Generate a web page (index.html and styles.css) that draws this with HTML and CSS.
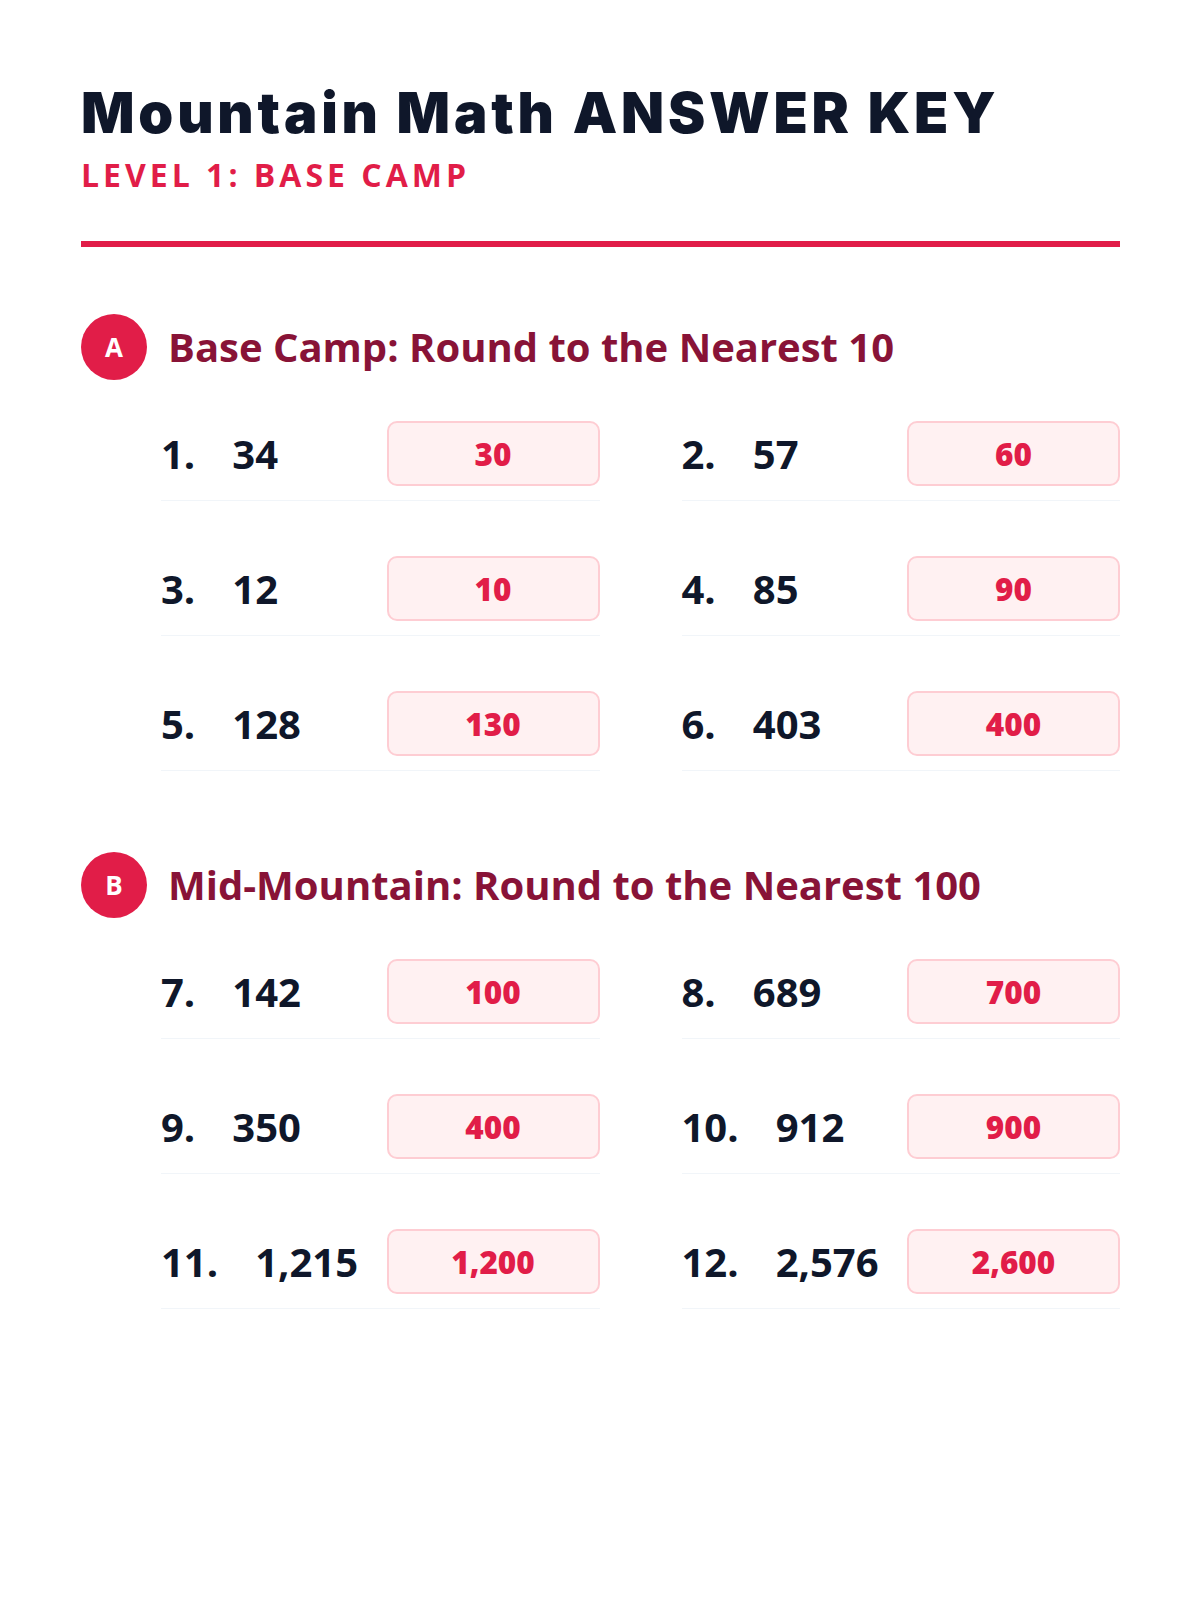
FILE: index.html
```html
<!DOCTYPE html>
<html lang="en">
<head>
<meta charset="utf-8">
<title>Mountain Math Answer Key</title>
<link rel="stylesheet" href="styles.css">
</head>
<body>
<main class="page">
  <header class="header">
    <h1 class="title">Mountain Math ANSWER KEY</h1>
    <p class="subtitle">LEVEL 1: BASE CAMP</p>
  </header>

  <section class="section">
    <div class="section-head">
      <span class="badge">A</span>
      <h2 class="section-title">Base Camp: Round to the Nearest 10</h2>
    </div>
    <div class="grid">
      <div class="row"><span class="num">1.</span><span class="val">34</span><span class="ans">30</span></div>
      <div class="row"><span class="num">2.</span><span class="val">57</span><span class="ans">60</span></div>
      <div class="row"><span class="num">3.</span><span class="val">12</span><span class="ans">10</span></div>
      <div class="row"><span class="num">4.</span><span class="val">85</span><span class="ans">90</span></div>
      <div class="row"><span class="num">5.</span><span class="val">128</span><span class="ans">130</span></div>
      <div class="row"><span class="num">6.</span><span class="val">403</span><span class="ans">400</span></div>
    </div>
  </section>

  <section class="section">
    <div class="section-head">
      <span class="badge">B</span>
      <h2 class="section-title">Mid-Mountain: Round to the Nearest 100</h2>
    </div>
    <div class="grid">
      <div class="row"><span class="num">7.</span><span class="val">142</span><span class="ans">100</span></div>
      <div class="row"><span class="num">8.</span><span class="val">689</span><span class="ans">700</span></div>
      <div class="row"><span class="num">9.</span><span class="val">350</span><span class="ans">400</span></div>
      <div class="row"><span class="num">10.</span><span class="val">912</span><span class="ans">900</span></div>
      <div class="row"><span class="num">11.</span><span class="val">1,215</span><span class="ans">1,200</span></div>
      <div class="row"><span class="num">12.</span><span class="val">2,576</span><span class="ans">2,600</span></div>
    </div>
  </section>
</main>
</body>
</html>
```

FILE: styles.css
```css
* { box-sizing: border-box; }

html, body {
  margin: 0;
  padding: 0;
  background: #ffffff;
}

body {
  font-family: "Open Sans", "Noto Sans", "Liberation Sans", sans-serif;
  color: #0f172a;
}

.page {
  width: 1200px;
  padding: 80px 80px 80px 81px;
}

.header {
  padding-bottom: 45px;
  border-bottom: 6px solid #e11d48;
}

.title {
  margin: 0;
  font-family: "Inter", "Liberation Sans", sans-serif;
  font-weight: 900;
  font-size: 56px;
  line-height: 67px;
  letter-spacing: 3.8px;
  color: #0f172a;
}

.subtitle {
  margin: 7px 0 0;
  font-weight: 700;
  font-size: 32px;
  line-height: 42px;
  letter-spacing: 4px;
  color: #e11d48;
}

.section {
  margin-top: 67px;
}

.section + .section {
  margin-top: 81px;
}

.section-head {
  display: flex;
  align-items: center;
  gap: 21px;
  margin-bottom: 41px;
}

.badge {
  flex: none;
  width: 66px;
  height: 66px;
  border-radius: 50%;
  background: #e11d48;
  color: #ffffff;
  font-weight: 700;
  font-size: 26px;
  display: flex;
  align-items: center;
  justify-content: center;
}

.section-title {
  margin: 0;
  font-weight: 700;
  font-size: 40px;
  line-height: 1.2;
  color: #881337;
}

.grid {
  display: grid;
  grid-template-columns: 1fr 1fr;
  column-gap: 82px;
  row-gap: 55px;
  padding-left: 80px;
}

.row {
  display: flex;
  align-items: center;
  padding-bottom: 14px;
  border-bottom: 1px solid #f1f5f9;
  font-weight: 700;
  font-size: 40px;
}

.num {
  margin-right: 37px;
}

.val {
  flex: 1;
}

.ans {
  flex: none;
  width: 213px;
  height: 65px;
  border: 2px solid #fecdd3;
  border-radius: 10px;
  background: #fff1f2;
  color: #e11d48;
  font-weight: 800;
  font-size: 31.5px;
  display: flex;
  align-items: center;
  justify-content: center;
}
```
